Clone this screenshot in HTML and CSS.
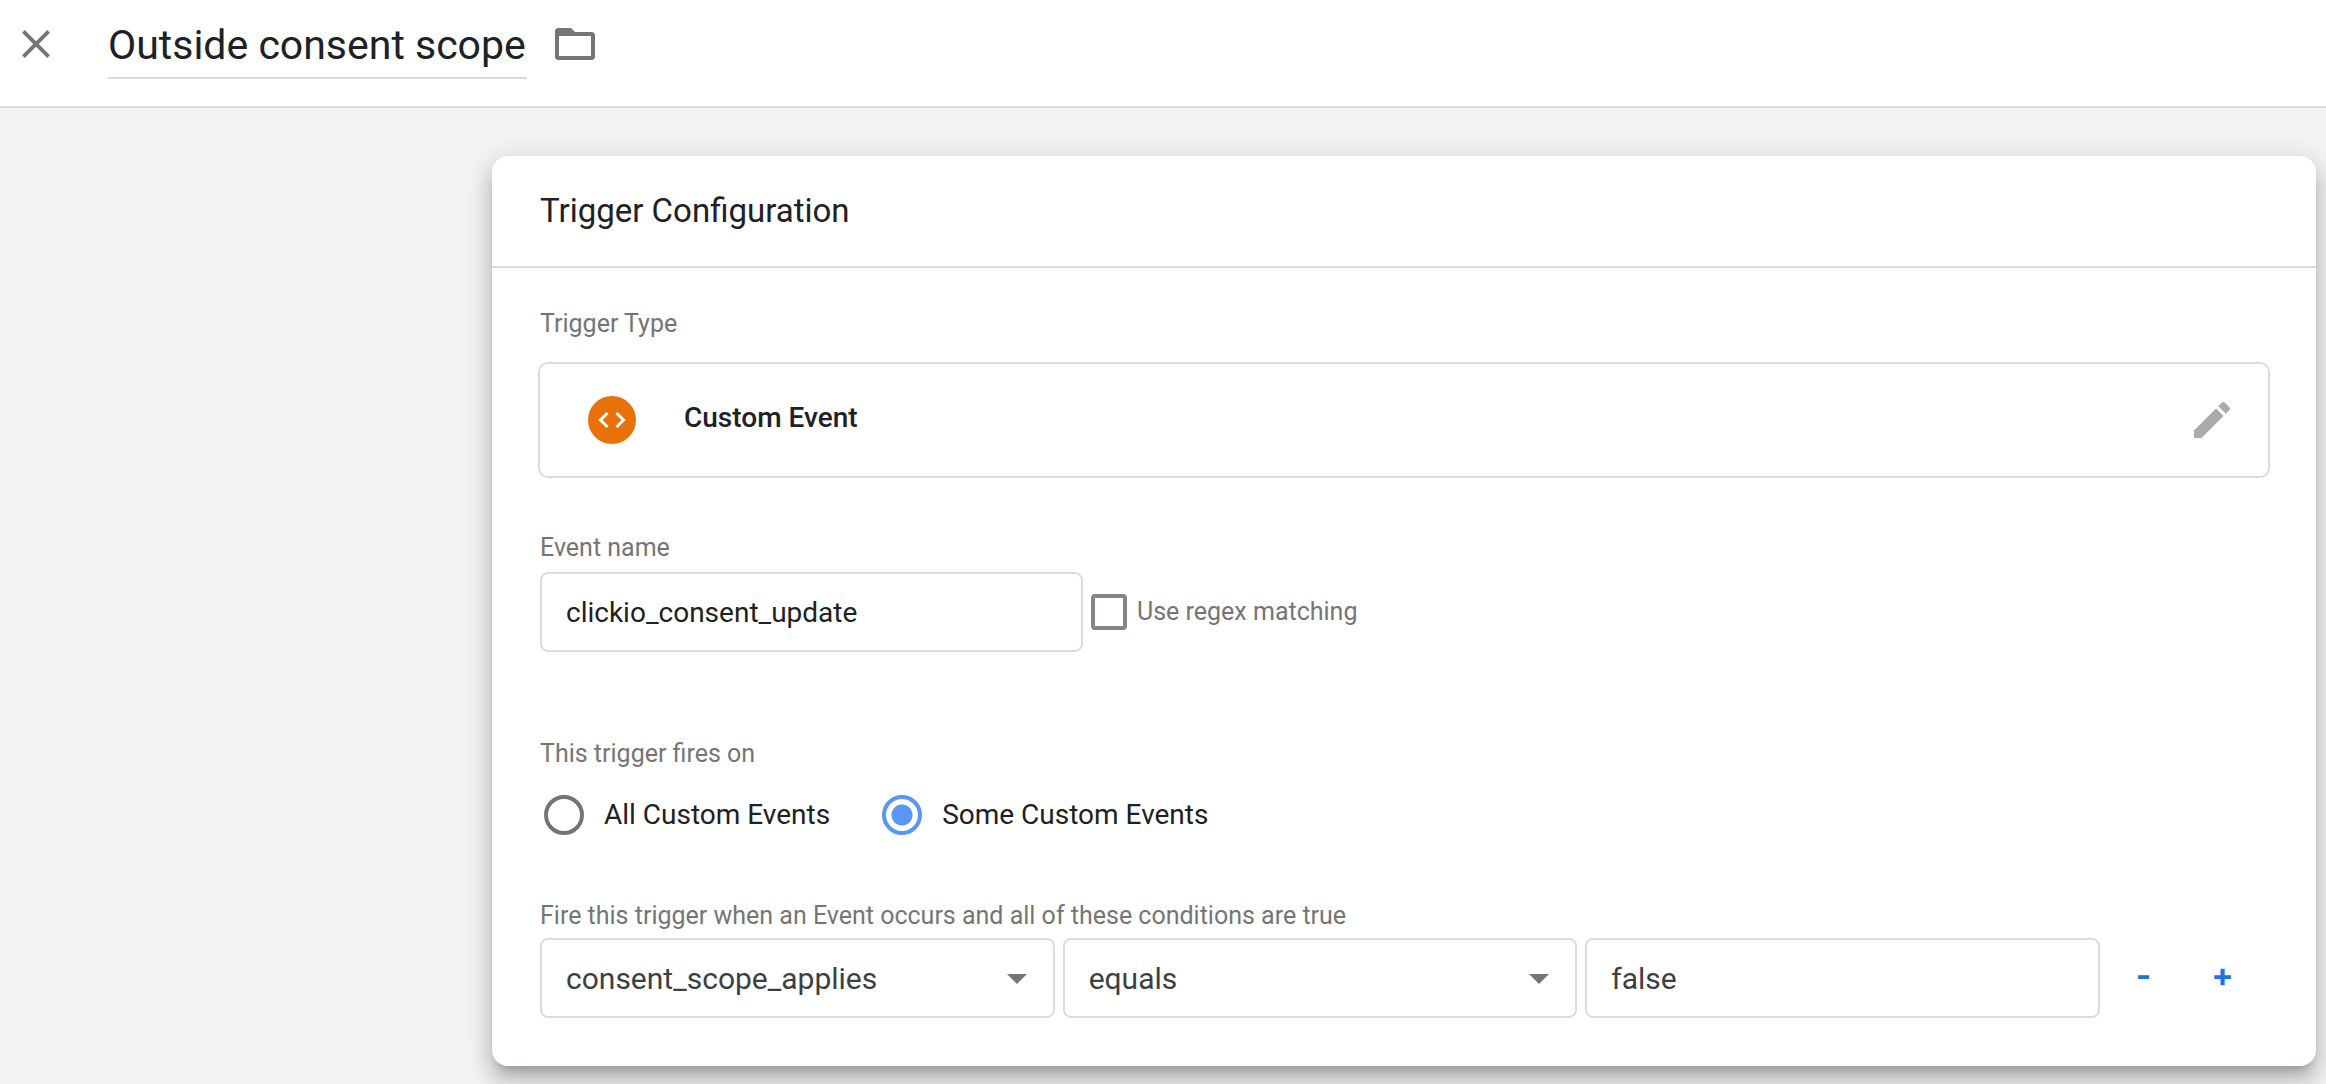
FILE: index.html
```
<!DOCTYPE html>
<html lang="en">
<head>
    <meta charset="UTF-8" />
    <meta name="viewport" content="width=device-width, initial-scale=1.0" />
    <title>Outside consent scope</title>
    <link rel="stylesheet" href="styles.css">
</head>
<body>

<header class="header">
    <button class="icon-btn" aria-label="Close">
        <svg width="48" height="48" viewBox="0 0 24 24"><path d="M19 6.41L17.59 5 12 10.59 6.41 5 5 6.41 10.59 12 5 17.59 6.41 19 12 13.41 17.59 19 19 17.59 13.41 12z"/></svg>
    </button>
    <input class="title" type="text" aria-label="Trigger name" value="Outside consent scope">
    <button class="icon-btn" aria-label="Choose folder">
        <svg width="48" height="48" viewBox="0 0 24 24"><path d="M20.4 6H12l-2-2H3.6C2.7 4 2 4.7 2 5.6v12.800c0 .9.7 1.600 1.600 1.600h16.800c.9 0 1.600-.7 1.600-1.600V7.600c0-.9-.7-1.600-1.600-1.600zM20 18H4V8h16v10z"/></svg>
    </button>
</header>

<main class="card">
    <h1 class="card-title">Trigger Configuration</h1>

    <div class="card-body">
        <div class="label">Trigger Type</div>
        <div class="type-box">
            <svg class="type-icon" width="48" height="48" viewBox="0 0 48 48">
                <circle cx="24" cy="24" r="24" fill="#e8710a"/>
                <path d="M19.5 17L12.5 24l7 7M28.5 17l7 7-7 7" fill="none" stroke="#fff" stroke-width="3"/>
            </svg>
            <span class="type-name">Custom Event</span>
            <button class="icon-btn edit" aria-label="Edit trigger type">
                <svg width="48" height="48" viewBox="0 0 24 24"><path d="M3 17.25V21h3.75L17.81 9.94l-3.75-3.75L3 17.25zM20.71 7.04c.39-.39.39-1.02 0-1.41l-2.34-2.34c-.39-.39-1.02-.39-1.41 0l-1.83 1.83 3.75 3.75 1.83-1.83z"/></svg>
            </button>
        </div>

        <label class="label" for="eventName">Event name</label>
        <div class="event-row">
            <input class="field event-name" type="text" id="eventName" value="clickio_consent_update">
            <input class="checkbox" type="checkbox" id="regex">
            <label class="label" for="regex">Use regex matching</label>
        </div>

        <div class="label" id="firesOn">This trigger fires on</div>
        <div class="radio-row" role="radiogroup" aria-labelledby="firesOn">
            <label class="option"><input class="radio" type="radio" name="fires">All Custom Events</label>
            <label class="option"><input class="radio" type="radio" name="fires" checked>Some Custom Events</label>
        </div>

        <div class="label">Fire this trigger when an Event occurs and all of these conditions are true</div>
        <div class="condition-row">
            <div class="conditions">
                <div class="select-wrap">
                    <select class="field condition" aria-label="Variable">
                        <option>consent_scope_applies</option>
                    </select>
                </div>
                <div class="select-wrap">
                    <select class="field condition" aria-label="Operator">
                        <option>equals</option>
                    </select>
                </div>
                <input class="field condition" type="text" aria-label="Value" value="false">
            </div>
            <div class="row-actions">
                <button class="text-btn" aria-label="Remove condition">-</button>
                <button class="text-btn" aria-label="Add condition">+</button>
            </div>
        </div>
    </div>
</main>

</body>
</html>
```

FILE: styles.css
```
* {
    box-sizing: border-box;
}

body {
    font-family: Roboto, Arial, sans-serif;
    background-color: #f1f3f4;
    color: #202124;
    margin: 0;
}

input,
select,
button {
    font-family: inherit;
    color: inherit;
    margin: 0;
}

.header {
    display: flex;
    align-items: flex-start;
    height: 108px;
    padding: 12px;
    background-color: #ffffff;
    border-bottom: 2px solid #dadce0;
}

.header .icon-btn {
    margin-top: 8px;
}

.title {
    width: 419px;
    height: 67px;
    margin: 0 24px 0 48px;
    padding: 0;
    border: none;
    border-bottom: 2px solid #dadce0;
    background: none;
    font-size: 41px;
}

.icon-btn {
    width: 48px;
    height: 48px;
    padding: 0;
    border: none;
    background: none;
    fill: #757575;
    cursor: pointer;
}

.icon-btn svg {
    display: block;
}

.card {
    margin: 48px 10px 18px 492px;
    background-color: #ffffff;
    border-radius: 16px;
    box-shadow: 0 10px 10px -6px rgba(0, 0, 0, 0.2),
                0 16px 20px 2px rgba(0, 0, 0, 0.14),
                0 6px 28px 4px rgba(0, 0, 0, 0.12);
}

.card-title {
    margin: 0;
    padding: 35px 48px;
    border-bottom: 2px solid #dadce0;
    font-size: 33px;
    font-weight: 400;
    line-height: 40px;
}

.card-body {
    padding: 40px 48px 48px;
}

.label {
    display: block;
    color: #757575;
    font-size: 25px;
    line-height: 32px;
}

.type-box {
    display: flex;
    align-items: center;
    height: 116px;
    margin: 22px -2px 54px;
    padding: 0 32px 0 48px;
    border: 2px solid #dadce0;
    border-radius: 10px;
}

.type-name {
    flex: 1;
    margin-left: 48px;
    padding-bottom: 6px;
    font-size: 28px;
    font-weight: 500;
}

.edit {
    fill: #aaaaaa;
}

.field {
    height: 80px;
    padding: 0 24px;
    border: 2px solid #dadce0;
    border-radius: 8px;
    background-color: #ffffff;
    font-size: 28px;
}

.event-row {
    display: flex;
    align-items: center;
    margin: 8px 0 86px;
}

.event-name {
    width: 543px;
}

.checkbox {
    appearance: none;
    width: 36px;
    height: 36px;
    margin: 0 10px 0 8px;
    border: 4px solid #80868b;
    border-radius: 4px;
}

.checkbox:checked {
    background-color: #5a96f5;
}

.radio-row {
    display: flex;
    gap: 52px;
    margin: 25px 0 65px;
    padding-left: 4px;
}

.option {
    display: flex;
    align-items: center;
    gap: 20px;
    font-size: 28px;
    line-height: 40px;
}

.radio {
    appearance: none;
    width: 40px;
    height: 40px;
    border: 4px solid #757575;
    border-radius: 50%;
}

.radio:checked {
    border-color: #5a96f5;
    background: radial-gradient(circle, #5a96f5 10px, transparent 11px);
}

.condition-row {
    display: flex;
    margin-top: 6px;
}

.conditions {
    display: grid;
    grid-template-columns: repeat(3, 1fr);
    gap: 8px;
    flex: 1;
}

.condition {
    width: 100%;
    color: #3c4043;
    font-size: 30px;
}

.select-wrap {
    position: relative;
}

.select-wrap select {
    appearance: none;
}

/* drop-down arrow */
.select-wrap::after {
    content: "";
    position: absolute;
    top: 36px;
    right: 28px;
    border: 10px solid transparent;
    border-top-color: #757575;
    border-bottom: none;
    pointer-events: none;
}

.row-actions {
    display: flex;
    width: 168px;
    padding: 0 6px 0 4px;
}

.text-btn {
    flex: 1;
    padding: 0 0 6px;
    border: none;
    background: none;
    color: #1a73e8;
    font-family: Inter, Roboto, sans-serif;
    font-size: 33px;
    font-weight: 700;
    cursor: pointer;
}
```
